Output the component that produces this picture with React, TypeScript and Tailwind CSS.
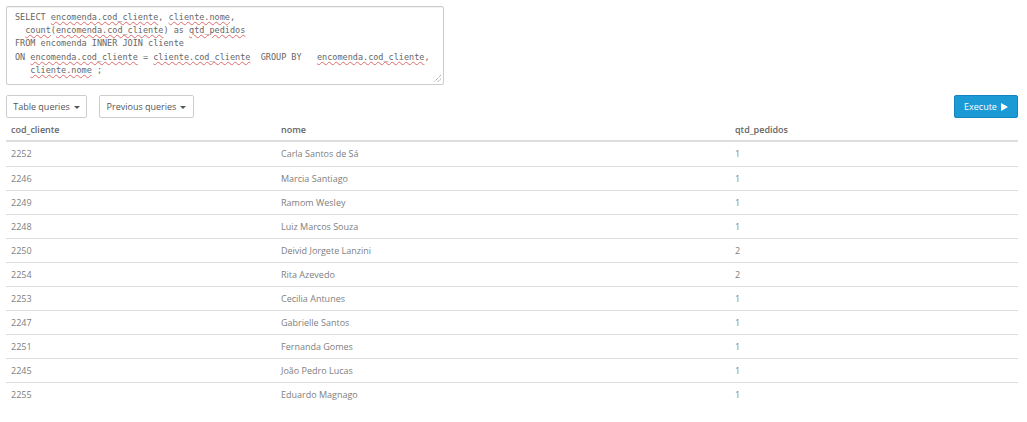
import { ReactNode } from "react";

const rows = [
  { id: "2252", nome: "Carla Santos de Sá", qtd: "1" },
  { id: "2246", nome: "Marcia Santiago", qtd: "1" },
  { id: "2249", nome: "Ramom Wesley", qtd: "1" },
  { id: "2248", nome: "Luiz Marcos Souza", qtd: "1" },
  { id: "2250", nome: "Deivid Jorgete Lanzini", qtd: "2" },
  { id: "2254", nome: "Rita Azevedo", qtd: "2" },
  { id: "2253", nome: "Cecilia Antunes", qtd: "1" },
  { id: "2247", nome: "Gabrielle Santos", qtd: "1" },
  { id: "2251", nome: "Fernanda Gomes", qtd: "1" },
  { id: "2245", nome: "João Pedro Lucas", qtd: "1" },
  { id: "2255", nome: "Eduardo Magnago", qtd: "1" },
];

// spell-check squiggle
const W = ({ children }: { children: ReactNode }) => (
  <span className="underline decoration-wavy decoration-[#e06a6a] decoration-[0.5px] underline-offset-[1px]">
    {children}
  </span>
);

const Caret = () => (
  <span className="ml-[4px] inline-block h-0 w-0 border-x-[3px] border-t-[3px] border-x-transparent border-t-[#555] align-middle" />
);

export default function App() {
  return (
    <div className="min-h-[422px] bg-white pl-[6px] pr-[9px] pt-[6px] font-['Open_Sans',sans-serif] text-[#555]">
      {/* query box */}
      <div className="relative h-[79px] w-[438px] rounded-[2px] border border-[#ccc] px-[8px] pt-[4px] shadow-[inset_0_1px_1px_rgba(0,0,0,0.06)]">
        <pre className="whitespace-pre font-['DejaVu_Sans_Mono',monospace] text-[8.5px] leading-[13.2px] text-[#666]">
          {"SELECT "}<W>encomenda.cod_cliente</W>{", "}<W>cliente.nome</W>{","}
          {"\n  "}<W>count</W>{"("}<W>encomenda.cod_cliente</W>{") as "}<W>qtd_pedidos</W>
          {"\nFROM encomenda INNER JOIN cliente"}
          {"\nON "}<W>encomenda.cod_cliente</W>{" = "}<W>cliente.cod_cliente</W>{"  GROUP BY   "}<W>encomenda.cod_cliente</W>{","}
          {"\n   "}<W>cliente.nome</W>{" ;"}
        </pre>
        <svg className="absolute bottom-[1px] right-[1px]" width="9" height="9" viewBox="0 0 9 9">
          <path d="M8 1 L1 8 M8 4.5 L4.5 8" stroke="#888" strokeWidth="1" strokeDasharray="1 1" />
        </svg>
      </div>

      {/* toolbar */}
      <div className="mt-[10px] flex items-center">
        <button className="h-[23px] w-[81px] rounded-[2px] border border-[#ccc] bg-white text-[9px] text-[#555]">
          Table queries<Caret />
        </button>
        <button className="ml-[12px] h-[23px] w-[95px] rounded-[2px] border border-[#ccc] bg-white text-[9px] text-[#555]">
          Previous queries<Caret />
        </button>
        <button className="ml-auto flex h-[23px] w-[64px] items-center justify-center gap-[4px] rounded-[2px] border border-[#1583bf] bg-[#1c9ad6] text-[9px] text-white">
          Execute
          <svg width="7" height="8" viewBox="0 0 7 8">
            <path d="M0 0 L7 4 L0 8 Z" fill="white" />
          </svg>
        </button>
      </div>

      {/* results */}
      <div className="mt-[1px] text-[9px]">
        <div className="grid h-[23px] grid-cols-[270px_454px_1fr] items-center border-b-2 border-[#ddd] font-semibold text-[#666]">
          <div className="pl-[5px]">cod_cliente</div>
          <div className="pl-[5px]">nome</div>
          <div className="pl-[5px]">qtd_pedidos</div>
        </div>
        {rows.map((r, i) => (
          <div
            key={r.id}
            className={`grid h-[24px] grid-cols-[270px_454px_1fr] items-center text-[#808080] ${i > 0 ? "border-t border-[#ddd]" : ""}`}
          >
            <div className="pl-[5px]">{r.id}</div>
            <div className="pl-[5px]">{r.nome}</div>
            <div className="pl-[5px]">{r.qtd}</div>
          </div>
        ))}
      </div>
    </div>
  );
}
